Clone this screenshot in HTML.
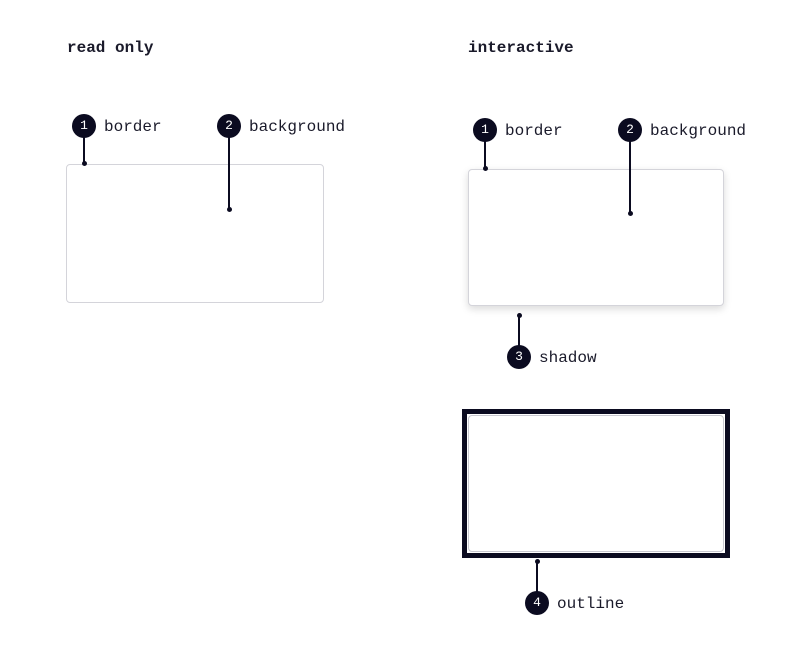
<!DOCTYPE html>
<html><head><style>
body{margin:0;width:797px;height:657px;background:#fff;position:relative;font-family:"Liberation Mono",monospace;color:#1a1a2a;overflow:hidden}
.h{position:absolute;font-weight:bold;font-size:16px;top:39px}
.card{position:absolute;background:#fff;border:1px solid #d4d4da;border-radius:4px;box-sizing:border-box}
.b{position:absolute;width:24px;height:24px;border-radius:50%;background:#0b0b20;color:#fff;font-size:13px;line-height:24px;text-align:center;margin:-12px 0 0 -12px}
.l{position:absolute;font-size:16px;line-height:20px;margin-top:-9px}
.v{position:absolute;width:2px;background:#0b0b20;margin-left:-1px}
.d{position:absolute;width:5px;height:5px;border-radius:50%;background:#0b0b20;margin:-2px 0 0 -2.5px}
</style></head><body>
<div class="h" style="left:67px">read only</div>
<div class="h" style="left:468px">interactive</div>

<div class="card" style="left:66px;top:164px;width:258px;height:139px"></div>
<div class="card" style="left:468px;top:169px;width:256px;height:137px;box-shadow:0 3px 8px rgba(0,0,0,0.15)"></div>
<div style="position:absolute;left:462px;top:409px;width:268px;height:149px;box-sizing:border-box;border:5px solid #0b0b20;background:#fff"></div>
<div class="card" style="left:468px;top:415px;width:256px;height:137px;border-color:#c8c8d0"></div>

<div class="v" style="left:84px;top:126px;height:37px"></div><div class="d" style="left:84px;top:163px"></div>
<div class="v" style="left:229px;top:126px;height:83px"></div><div class="d" style="left:229px;top:209px"></div>
<div class="v" style="left:485px;top:130px;height:38px"></div><div class="d" style="left:485px;top:168px"></div>
<div class="v" style="left:630px;top:130px;height:83px"></div><div class="d" style="left:630px;top:213px"></div>
<div class="v" style="left:519px;top:315px;height:42px"></div><div class="d" style="left:519px;top:315px"></div>
<div class="v" style="left:537px;top:561px;height:42px"></div><div class="d" style="left:537px;top:561px"></div>

<div class="b" style="left:84px;top:126px">1</div><div class="l" style="left:104px;top:126px">border</div>
<div class="b" style="left:229px;top:126px">2</div><div class="l" style="left:249px;top:126px">background</div>
<div class="b" style="left:485px;top:130px">1</div><div class="l" style="left:505px;top:130px">border</div>
<div class="b" style="left:630px;top:130px">2</div><div class="l" style="left:650px;top:130px">background</div>
<div class="b" style="left:519px;top:357px">3</div><div class="l" style="left:539px;top:357px">shadow</div>
<div class="b" style="left:537px;top:603px">4</div><div class="l" style="left:557px;top:603px">outline</div>
</body></html>
